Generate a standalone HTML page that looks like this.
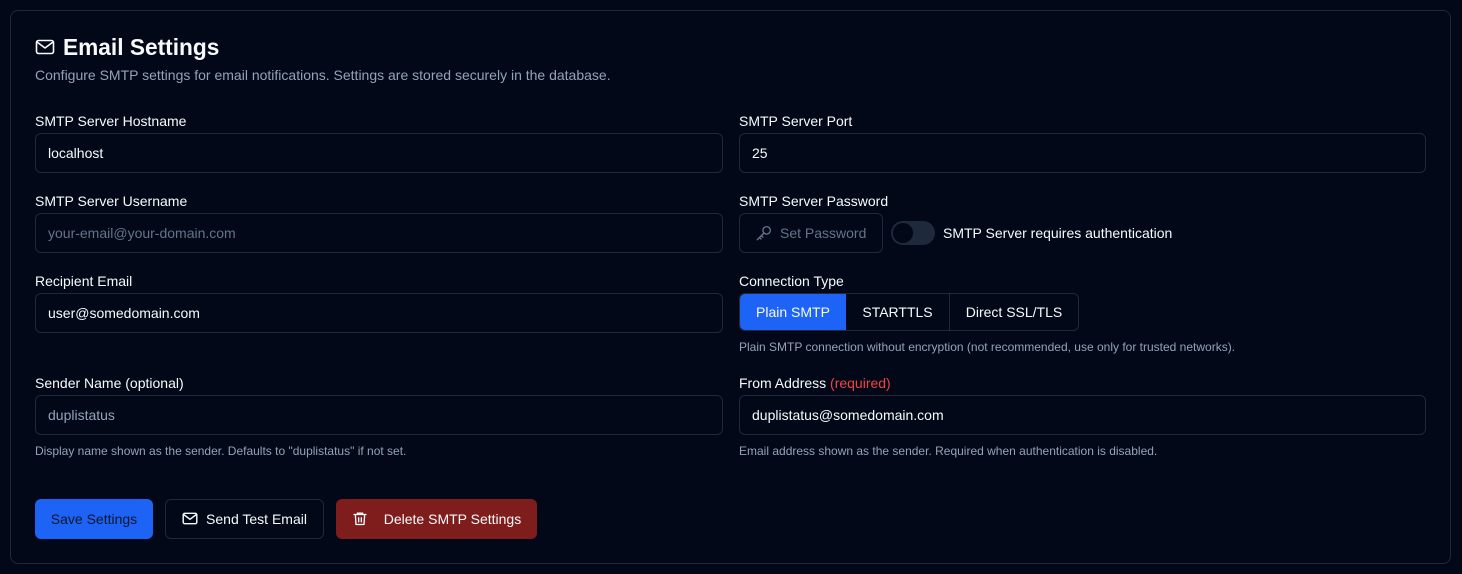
<!DOCTYPE html>
<html><head><style>
*{box-sizing:border-box;margin:0;padding:0}
body{width:1462px;height:574px;background:#020817;font-family:"Liberation Sans",sans-serif;color:#f8fafc;position:relative;overflow:hidden}
.card{position:absolute;left:10px;top:10px;width:1441px;height:554px;border:1px solid #1e293b;border-radius:8px;background:#020817}
.a{position:absolute}
.lbl{position:absolute;font-size:14px;line-height:16px;color:#f8fafc}
.inp{position:absolute;height:40px;border:1px solid #1e293b;border-radius:6px;font-size:14px;line-height:38px;padding-left:12px;color:#f8fafc}
.ph{color:#64748b}
.help{position:absolute;font-size:12px;line-height:14px;color:#94a3b8}
.btn{position:absolute;height:40px;border-radius:6px;font-size:14px;line-height:40px;text-align:center}
</style></head><body>
<div class="card"></div>
<svg class="a" style="left:35px;top:38px" width="20" height="18" viewBox="0 0 20 18" fill="none" stroke="#f8fafc" stroke-width="1.6" stroke-linecap="round" stroke-linejoin="round"><rect x="1.5" y="2.5" width="17" height="13" rx="2"/><path d="M2 4l8 6 8-6"/></svg>
<div class="a" style="left:63px;top:34px;font-size:22.7px;font-weight:bold;line-height:27px">Email Settings</div>
<div class="a" style="left:35px;top:67px;font-size:14px;line-height:16px;color:#94a3b8">Configure SMTP settings for email notifications. Settings are stored securely in the database.</div>

<div class="lbl" style="left:35px;top:113px">SMTP Server Hostname</div>
<div class="inp" style="left:35px;top:133px;width:688px">localhost</div>
<div class="lbl" style="left:739px;top:113px">SMTP Server Port</div>
<div class="inp" style="left:739px;top:133px;width:687px">25</div>

<div class="lbl" style="left:35px;top:193px">SMTP Server Username</div>
<div class="inp ph" style="left:35px;top:213px;width:688px">your-email@your-domain.com</div>
<div class="lbl" style="left:739px;top:193px">SMTP Server Password</div>
<div class="inp ph" style="left:739px;top:213px;width:144px;padding-left:40px">Set Password</div>
<svg class="a" style="left:755px;top:224px" width="18" height="18" viewBox="0 0 24 24" fill="none" stroke="#64748b" stroke-width="1.8" stroke-linecap="round" stroke-linejoin="round"><circle cx="15.5" cy="8.5" r="5"/><path d="M12 12L3 21M6 18l2 2M8.5 15.5l2 2"/></svg>
<div class="a" style="left:891px;top:221px;width:44px;height:24px;border-radius:12px;background:#1e293b"><div class="a" style="left:2px;top:2px;width:20px;height:20px;border-radius:10px;background:#020817"></div></div>
<div class="lbl" style="left:943px;top:225px">SMTP Server requires authentication</div>

<div class="lbl" style="left:35px;top:273px">Recipient Email</div>
<div class="inp" style="left:35px;top:293px;width:688px">user@somedomain.com</div>
<div class="lbl" style="left:739px;top:273px">Connection Type</div>
<div class="a" style="left:739px;top:293px;width:340px;height:38px;border:1px solid #1e293b;border-radius:6px;overflow:hidden">
<div class="a" style="left:0;top:0;width:106px;height:36px;background:#1d63f5;line-height:36px;text-align:center;font-size:14px">Plain SMTP</div>
<div class="a" style="left:106px;top:0;width:104px;height:36px;line-height:36px;text-align:center;font-size:14px;border-right:1px solid #1e293b">STARTTLS</div>
<div class="a" style="left:210px;top:0;width:128px;height:36px;line-height:36px;text-align:center;font-size:14px">Direct SSL/TLS</div>
</div>
<div class="help" style="left:739px;top:340px">Plain SMTP connection without encryption (not recommended, use only for trusted networks).</div>

<div class="lbl" style="left:35px;top:375px">Sender Name (optional)</div>
<div class="inp ph" style="left:35px;top:395px;width:688px;color:#94a3b8">duplistatus</div>
<div class="help" style="left:35px;top:444px">Display name shown as the sender. Defaults to "duplistatus" if not set.</div>
<div class="lbl" style="left:739px;top:375px">From Address <span style="color:#ef4444">(required)</span></div>
<div class="inp" style="left:739px;top:395px;width:687px">duplistatus@somedomain.com</div>
<div class="help" style="left:739px;top:444px">Email address shown as the sender. Required when authentication is disabled.</div>

<div class="btn" style="left:35px;top:499px;width:118px;background:#1d63f5;color:#0f172a">Save Settings</div>
<div class="btn" style="left:165px;top:499px;width:159px;border:1px solid #1e293b;line-height:38px;padding-left:24px">Send Test Email</div>
<svg class="a" style="left:182px;top:511px" width="16" height="15" viewBox="0 0 20 18" fill="none" stroke="#f8fafc" stroke-width="1.8" stroke-linecap="round" stroke-linejoin="round"><rect x="1.5" y="2.5" width="17" height="13" rx="2"/><path d="M2 4l8 6 8-6"/></svg>
<div class="btn" style="left:336px;top:499px;width:201px;background:#7f1d1d;padding-left:32px">Delete SMTP Settings</div>
<svg class="a" style="left:352px;top:510px" width="16" height="17" viewBox="0 0 24 24" fill="none" stroke="#f8fafc" stroke-width="2" stroke-linecap="round" stroke-linejoin="round"><path d="M3 6h18M8 6V4h8v2M5 6l1 15h12l1-15M10 11v6M14 11v6"/></svg>
</body></html>
